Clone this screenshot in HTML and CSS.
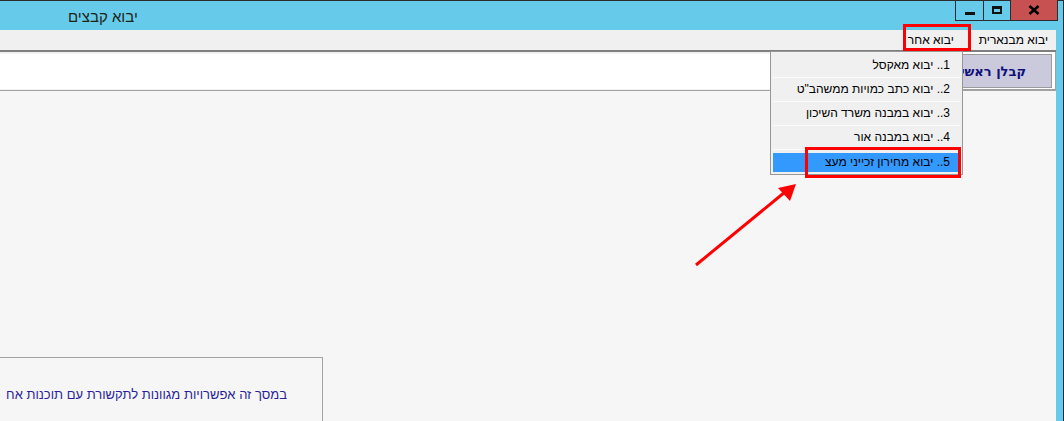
FILE: index.html
```html
<!DOCTYPE html>
<html lang="he">
<head>
<meta charset="utf-8">
<link rel="stylesheet" href="styles.css">
</head>
<body>
<div class="window">
  <div class="titlebar">
    <div class="title">יבוא קבצים</div>
    <div class="winbtns">
      <div class="wbtn min"><span class="min-glyph"></span></div>
      <div class="wbtn max"><span class="max-glyph"></span></div>
      <div class="wbtn close"><svg width="12" height="10" viewBox="0 0 12 10"><path d="M1.5 1 L10.5 9 M10.5 1 L1.5 9" stroke="#000" stroke-width="2.6" fill="none"/></svg></div>
    </div>
  </div>
  <div class="client">
    <div class="menubar">
      <span class="mitem first">יבוא מבנארית</span>
      <span class="mitem">יבוא אחר</span>
    </div>
    <div class="toprow">
      <div class="whitebox"></div>
      <div class="panel"><div class="panel-in">קבלן ראשי</div></div>
    </div>
    <div class="groupbox">
      <div class="gtext">במסך זה אפשרויות מגוונות לתקשורת עם תוכנות אח</div>
    </div>
  </div>
  <div class="dropdown">
    <div class="ditem">1.. יבוא מאקסל</div>
    <div class="ditem">2.. יבוא כתב כמויות ממשהב"ט</div>
    <div class="ditem">3.. יבוא במבנה משרד השיכון</div>
    <div class="ditem">4.. יבוא במבנה אור</div>
    <div class="ditem sel">5.. יבוא מחירון זכייני מעצ</div>
  </div>
  <div class="redbox rb-menu"></div>
  <div class="redbox rb-item"></div>
  <svg class="arrow" width="1064" height="421" viewBox="0 0 1064 421">
    <line x1="696" y1="265" x2="785" y2="192" stroke="#ff0000" stroke-width="3"/>
    <polygon points="796,184 778,188 790,201" fill="#ff0000"/>
  </svg>
</div>
</body>
</html>
```
FILE: styles.css
```css
* { box-sizing: border-box; }
html, body { margin: 0; padding: 0; }
body {
  width: 1064px;
  height: 421px;
  overflow: hidden;
  font-family: "Liberation Sans", Arial, sans-serif;
  background: #66cbea;
}
.window {
  position: relative;
  width: 1064px;
  height: 421px;
  background: #66cbea;
  border-top: 1px solid #2b2b2b;
  border-right: 1px solid #2b2b2b;
  display: flex;
  flex-direction: column;
}
.titlebar {
  height: 29px;
  display: flex;
  justify-content: space-between;
  align-items: flex-start;
  padding-right: 5px;
}
.title {
  margin-left: 68px;
  margin-top: 7px;
  font-size: 15px;
  color: #1e2414;
}
.winbtns {
  display: flex;
  height: 21px;
  margin-top: -1px;
  border: 1px solid #2d2d2d;
  border-top: none;
}
.wbtn {
  height: 100%;
  display: flex;
  align-items: center;
  justify-content: center;
}
.wbtn.min { width: 28px; border-right: 1px solid #2d2d2d; }
.wbtn.max { width: 27px; border-right: 1px solid #2d2d2d; }
.wbtn.close { width: 46px; background: #c75050; }
.min-glyph {
  width: 10px;
  height: 3px;
  background: #111;
  margin-top: 6px;
}
.max-glyph {
  width: 10px;
  height: 8px;
  border: 2px solid #111;
  border-top-width: 3px;
}
.client {
  width: 1056px;
  flex: 1;
  background: #f6f6f6;
  display: flex;
  flex-direction: column;
}
.menubar {
  height: 20px;
  background: #f0f0f0;
  direction: rtl;
  display: flex;
  align-items: center;
  padding-right: 8px;
  font-size: 12px;
  color: #000;
}
.mitem.first { padding-left: 25px; }
.toprow {
  height: 41px;
  display: flex;
  border-top: 2px solid #7f7f7f;
  border-bottom: 1px solid #a3a3a3;
  background: #f0f0f0;
}
.whitebox {
  flex: 1;
  background: #fff;
  margin-top: 1px;
  margin-bottom: 1px;
  border-top: 1px solid #f3f3f3;
}
.panel {
  width: 124px;
  border: 1px solid #a0a0a0;
  border-top: none;
  padding: 2px 3px 1px 2px;
  background: #fff;
}
.panel-in {
  height: 100%;
  background: #cbcadc;
  border: 1px solid #9a9a9a;
  direction: rtl;
  display: flex;
  align-items: center;
  padding-right: 25px;
  font-family: "DejaVu Sans", sans-serif;
  font-size: 13px;
  font-weight: bold;
  color: #10107a;
  white-space: nowrap;
  overflow: hidden;
}
.groupbox {
  margin-top: 266px;
  width: 323px;
  flex: 1;
  border-top: 1px solid #a3a3a3;
  border-right: 1px solid #a3a3a3;
  direction: rtl;
  padding-top: 29px;
  padding-right: 35px;
  overflow: hidden;
}
.gtext {
  font-size: 13px;
  color: #2a1f9a;
  white-space: nowrap;
}
.dropdown {
  position: absolute;
  left: 770px;
  top: 50px;
  width: 193px;
  height: 124px;
  background: #f0f0f0;
  border: 1px solid #979797;
  padding: 2px 2px 2px 2px;
  direction: rtl;
}
.ditem {
  height: 24px;
  line-height: 22px;
  border-bottom: 1px solid #fbfbfb;
  padding-right: 10px;
  font-size: 12px;
  color: #000;
  white-space: nowrap;
}
.ditem.sel {
  background: #3399ff;
  height: 19px;
  line-height: 18px;
  margin-top: 3px;
  border-bottom: none;
}
.redbox {
  position: absolute;
  border: 3px solid #ff0000;
}
.rb-menu { left: 903px; top: 23px; width: 68px; height: 27px; }
.rb-item { left: 805px; top: 146px; width: 156px; height: 31px; }
.arrow {
  position: absolute;
  left: 0;
  top: -1px;
  pointer-events: none;
}
```
